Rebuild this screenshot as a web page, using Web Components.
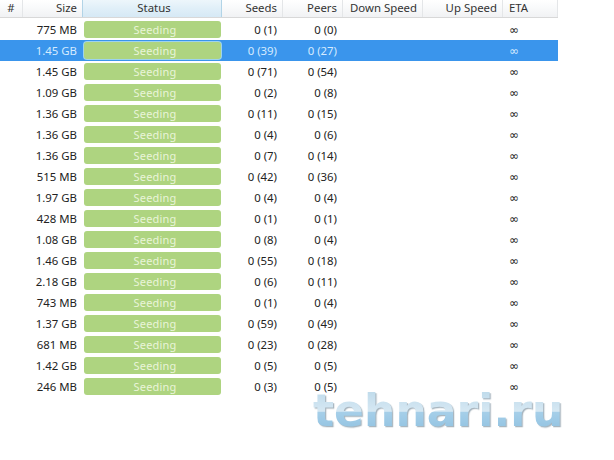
<!DOCTYPE html>
<html><head><meta charset="utf-8">
<style>
html,body{margin:0;background:#fff;width:614px;height:460px;overflow:hidden}
body{font:11.4px "Noto Sans",sans-serif;color:#222}
</style></head>
<body>
<torrent-table id="t"></torrent-table>
<script>
const COLS='23px 60px 139px 61px 60px 80px 80px 55px';
class HeadCell extends HTMLElement{
  constructor(){super();this.attachShadow({mode:'open'}).innerHTML=`<style>
  :host{display:flex;align-items:center;height:100%;box-sizing:border-box;padding:0 5px 2px;border-right:1px solid #e4e6e8;justify-content:flex-end;white-space:nowrap;color:#333}
  :host([a=c]){justify-content:center}
  :host([a=l]){justify-content:flex-start;padding-left:6px}
  :host([sorted]){background:linear-gradient(#edf6fb 0,#e0eff8 50%,#d6e9f5 100%);border-left:1px solid #b2d4e7;border-right:1px solid #b2d4e7;margin-left:-1px;padding:0 4px 2px 8px}
  </style><slot></slot>`}
}
class HeaderRow extends HTMLElement{
  constructor(){super();this.attachShadow({mode:'open'}).innerHTML=`<style>
  :host{display:grid;grid-template-columns:${COLS};width:558px;height:18px;box-sizing:border-box;border-bottom:1px solid #d8d8d8;background:linear-gradient(#fff 0,#f8f9fa 50%,#f1f2f4 100%)}
  </style><slot></slot>`}
}
class StatusBar extends HTMLElement{
  constructor(){super();this.attachShadow({mode:'open'}).innerHTML=`<style>
  :host{display:flex;align-items:center;justify-content:center;height:17px;margin:0 1px;padding:0 0 1px 5px;box-sizing:border-box;border-radius:3px;background:#aed480;color:#e9f4d8;font-size:11px;letter-spacing:.2px}
  :host([sel]){box-shadow:0 0 0 1px #9ed3ee}
  </style><slot></slot>`}
}
class TorrentRow extends HTMLElement{
  connectedCallback(){
    const [size,seeds,peers]=this.getAttribute('data').split('|');
    const sel=this.hasAttribute('sel');
    this.attachShadow({mode:'open'}).innerHTML=`<style>
    :host{display:grid;grid-template-columns:${COLS};width:558px;height:21px;align-items:center;color:#222}
    :host([sel]){background:#3a95ec;color:#d5ebff}
    .r{text-align:right;padding-right:6px;white-space:nowrap}
    .e{padding-left:6px;font-family:"DejaVu Sans",sans-serif;font-size:12px;line-height:1}
    </style><span></span><span class="r">${size}</span><status-bar ${sel?'sel':''}>Seeding</status-bar><span class="r">${seeds}</span><span class="r">${peers}</span><span></span><span></span><span class="e">∞</span>`;
  }
}
class Watermark extends HTMLElement{
  constructor(){super();this.attachShadow({mode:'open'}).innerHTML=`<style>
  :host{position:absolute;left:313px;top:388px;display:block;width:252px;height:45px}
  span{display:block;width:210px;transform-origin:0 0;transform:scale(1.225,1.25);font:bold 36px/36px "DejaVu Sans",sans-serif;white-space:nowrap;background:linear-gradient(#bcd9ea 0,#d6e8f3 52%,#a6cfe9 53%,#8fc1e0 100%);-webkit-background-clip:text;background-clip:text;color:transparent;filter:drop-shadow(1px 1px 0 #a9b6bf)}
  </style><span><slot></slot></span>`}
}
class TorrentTable extends HTMLElement{
  constructor(){super();
    const rows=[['775 MB','0 (1)','0 (0)'],['1.45 GB','0 (39)','0 (27)'],['1.45 GB','0 (71)','0 (54)'],['1.09 GB','0 (2)','0 (8)'],['1.36 GB','0 (11)','0 (15)'],['1.36 GB','0 (4)','0 (6)'],['1.36 GB','0 (7)','0 (14)'],['515 MB','0 (42)','0 (36)'],['1.97 GB','0 (4)','0 (4)'],['428 MB','0 (1)','0 (1)'],['1.08 GB','0 (8)','0 (4)'],['1.46 GB','0 (55)','0 (18)'],['2.18 GB','0 (6)','0 (11)'],['743 MB','0 (1)','0 (4)'],['1.37 GB','0 (59)','0 (49)'],['681 MB','0 (23)','0 (28)'],['1.42 GB','0 (5)','0 (5)'],['246 MB','0 (3)','0 (5)']];
    this.attachShadow({mode:'open'}).innerHTML=`<style>
    :host{display:block;position:relative;width:614px;height:460px}
    .body{padding-top:1px}
    </style>
    <header-row><head-cell a="c">#</head-cell><head-cell>Size</head-cell><head-cell a="c" sorted>Status</head-cell><head-cell>Seeds</head-cell><head-cell>Peers</head-cell><head-cell>Down Speed</head-cell><head-cell>Up Speed</head-cell><head-cell a="l">ETA</head-cell></header-row>
    <div class="body">${rows.map((r,i)=>`<torrent-row ${i==1?'sel':''} data="${r.join('|')}"></torrent-row>`).join('')}</div>
    <water-mark>tehnari.ru</water-mark>`;
  }
}
customElements.define('head-cell',HeadCell);
customElements.define('header-row',HeaderRow);
customElements.define('status-bar',StatusBar);
customElements.define('torrent-row',TorrentRow);
customElements.define('water-mark',Watermark);
customElements.define('torrent-table',TorrentTable);
</script>
</body></html>
